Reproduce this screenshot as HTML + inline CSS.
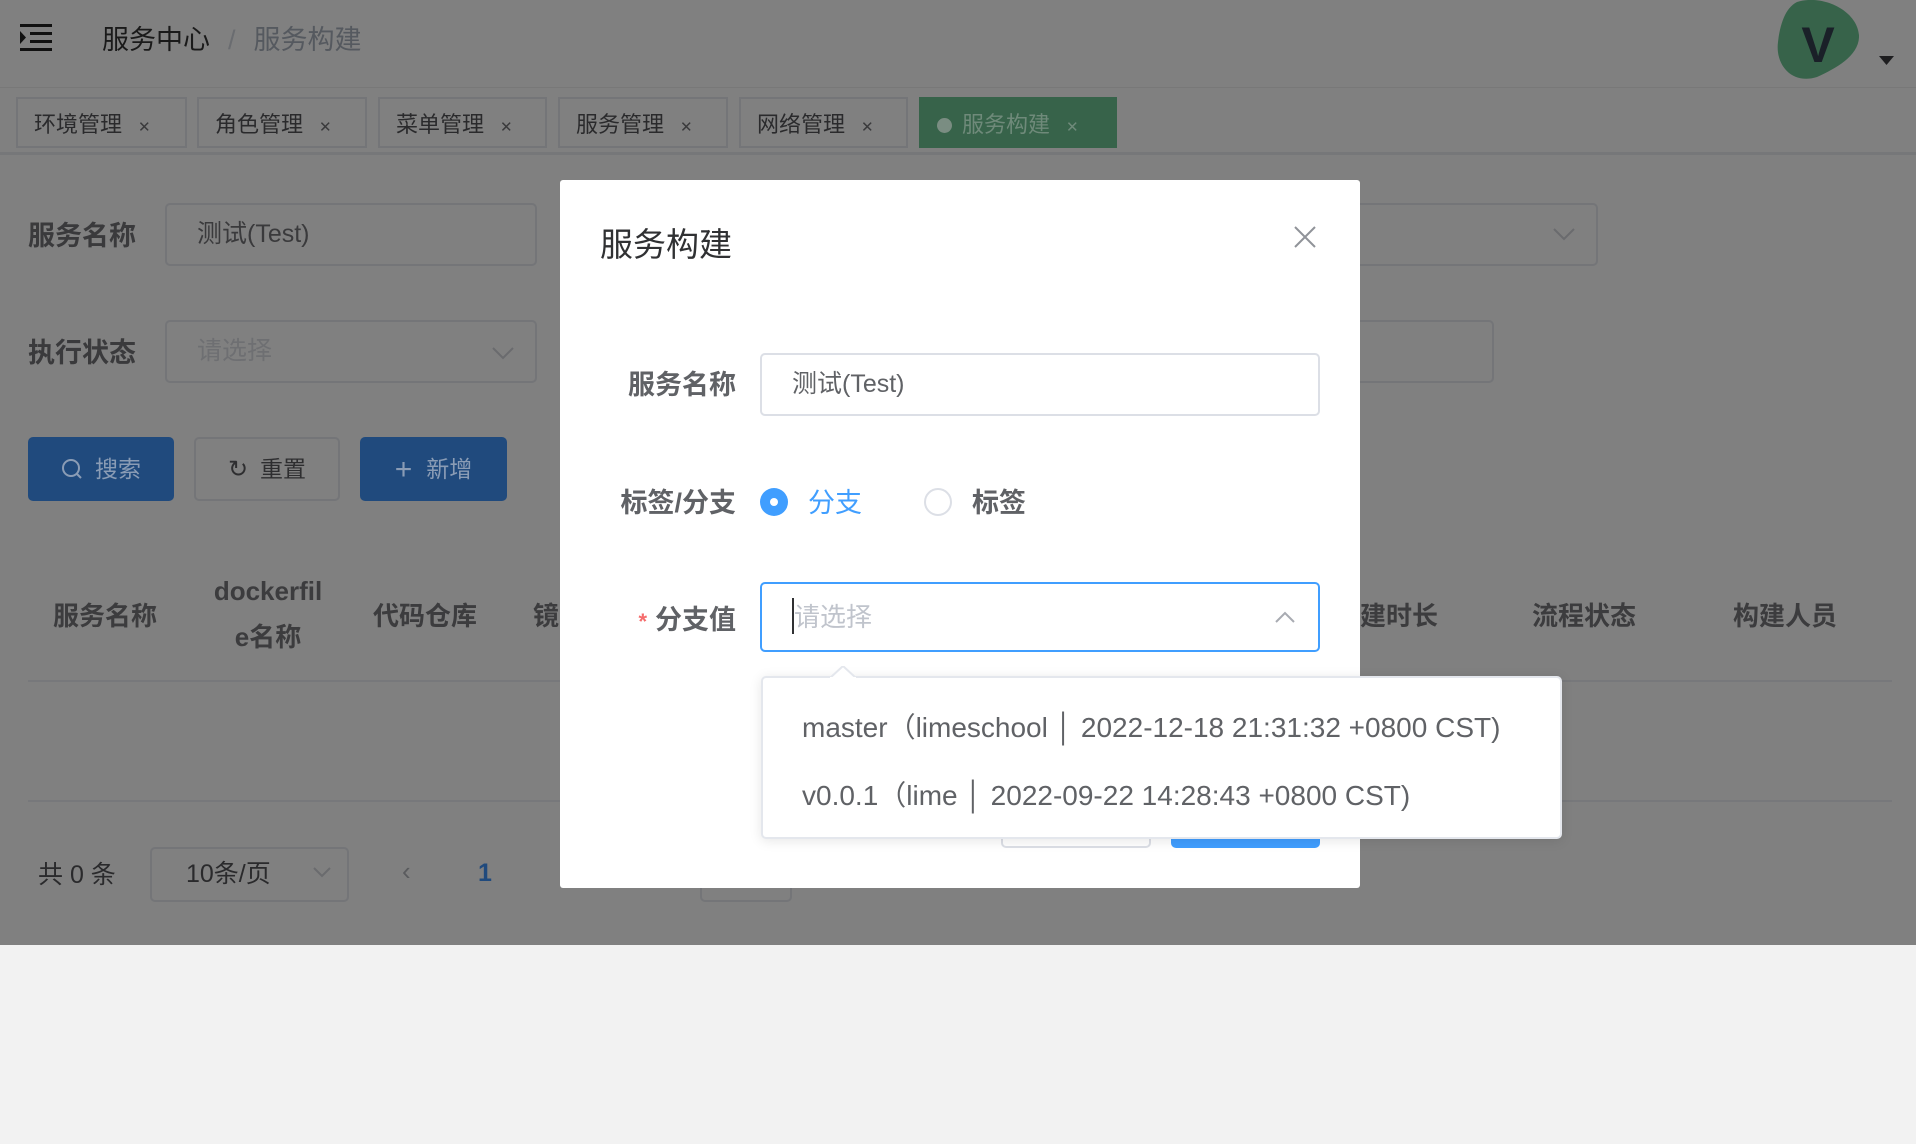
<!DOCTYPE html>
<html><head><meta charset="utf-8"><style>
*{box-sizing:border-box;margin:0;padding:0}
body{width:1916px;height:1144px;overflow:hidden;background:#f2f2f2;font-family:"Liberation Sans","Noto Sans CJK SC",sans-serif;position:relative}
.app{position:absolute;left:0;top:0;width:1916px;height:945px;background:#808080}
.a{position:absolute}
.hdr{left:0;top:0;width:1916px;height:88px;background:#808080;border-bottom:1px solid #787878}
.tabs{left:0;top:88px;width:1916px;height:67px;border-bottom:3px solid #767779}
.tab{position:absolute;top:97px;height:51px;border:2px solid #747578;font-size:22px;color:#2a2a2c;line-height:51px;padding-left:16px}
.tab i{font-style:normal;font-size:15px;margin-left:16px;color:#3a3a3c}
.lbl{font-size:27px;font-weight:bold;color:#3a3a3c}
.box{border:2px solid #747578;border-radius:5px}
.th{font-size:26px;font-weight:bold;color:#3c3c3e;text-align:center}
.btn{border-radius:5px;font-size:23px;color:#8a9cb5;text-align:center;line-height:64px}
.ml{font-size:27px;font-weight:bold;color:#606266;text-align:right;width:200px}
</style></head><body>
<div class="app">
<div class="a hdr"></div>
<svg class="a" style="left:20px;top:24px" width="32" height="28" viewBox="0 0 32 28"><rect x="0" y="0" width="32" height="3" fill="#111"/><rect x="10" y="8" width="22" height="3" fill="#111"/><rect x="10" y="16" width="22" height="3" fill="#111"/><rect x="0" y="24" width="32" height="3" fill="#111"/><path d="M0 7 L6 13.5 L0 20Z" fill="#111"/></svg>
<div class="a" style="left:102px;top:18px;font-size:27px;color:#1a1a1a">服务中心<span style="color:#6a6c70;margin:0 18px">/</span><span style="color:#55595f">服务构建</span></div>
<svg class="a" style="left:1777px;top:0" width="82" height="80" viewBox="0 0 82 80"><path d="M20 2 C45 -6 80 10 82 35 C83 55 60 68 40 77 C15 85 -2 65 1 42 C3 25 8 8 20 2Z" fill="#37634a"/><text x="41" y="62" text-anchor="middle" font-size="50" font-weight="bold" fill="#1a2028" font-family="Liberation Sans">V</text></svg>
<svg class="a" style="left:1879px;top:56px" width="15" height="10"><path d="M0 0H15L7.5 9Z" fill="#1e1e20"/></svg>
<div class="a tabs"></div>
<div class="tab" style="left:16px;width:171px">环境管理<i>✕</i></div>
<div class="tab" style="left:197px;width:170px">角色管理<i>✕</i></div>
<div class="tab" style="left:378px;width:169px">菜单管理<i>✕</i></div>
<div class="tab" style="left:558px;width:170px">服务管理<i>✕</i></div>
<div class="tab" style="left:739px;width:169px">网络管理<i>✕</i></div>
<div class="tab" style="left:919px;width:198px;background:#37634a;border-color:#37634a;color:#6f8a7a"><span style="display:inline-block;width:15px;height:15px;border-radius:50%;background:#7a8d82;margin-right:10px;vertical-align:-1px"></span>服务构建<i style="color:#6f8a7a">✕</i></div>

<div class="a lbl" style="left:28px;top:214px">服务名称</div>
<div class="a box" style="left:165px;top:203px;width:372px;height:63px;font-size:25px;color:#3a3a3c;line-height:59px;padding-left:30px">测试(Test)</div>
<div class="a box" style="left:1340px;top:203px;width:258px;height:63px"></div>
<svg class="a" style="left:1553px;top:228px" width="22" height="14"><path d="M1 1L11 11L21 1" stroke="#6a6b6e" stroke-width="2" fill="none"/></svg>
<div class="a lbl" style="left:28px;top:331px">执行状态</div>
<div class="a box" style="left:165px;top:320px;width:372px;height:63px;font-size:25px;color:#6e6f72;line-height:59px;padding-left:30px">请选择</div>
<svg class="a" style="left:492px;top:347px" width="22" height="14"><path d="M1 1L11 11L21 1" stroke="#6a6b6e" stroke-width="2" fill="none"/></svg>
<div class="a box" style="left:1340px;top:320px;width:154px;height:63px"></div>

<div class="a btn" style="left:28px;top:437px;width:146px;height:64px;background:#204a7d"><svg width="22" height="22" viewBox="0 0 22 22" style="vertical-align:-3px;margin-right:12px"><circle cx="10" cy="10" r="8" stroke="#8a9cb5" stroke-width="2" fill="none"/><path d="M16 16L20 20" stroke="#8a9cb5" stroke-width="2"/></svg>搜索</div>
<div class="a btn box" style="left:194px;top:437px;width:146px;height:64px;color:#2e2e30;line-height:60px"><span style="font-size:24px;margin-right:12px">↻</span>重置</div>
<div class="a btn" style="left:360px;top:437px;width:147px;height:64px;background:#204a7d"><span style="font-size:30px;margin-right:14px;vertical-align:-2px">+</span>新增</div>

<div class="a th" style="left:53px;top:596px">服务名称</div>
<div class="a th" style="left:198px;top:568px;width:140px;line-height:46px">dockerfil<br>e名称</div>
<div class="a th" style="left:373px;top:596px">代码仓库</div>
<div class="a th" style="left:533px;top:596px">镜</div>
<div class="a th" style="left:1360px;top:596px">建时长</div>
<div class="a th" style="left:1532px;top:596px">流程状态</div>
<div class="a th" style="left:1733px;top:596px">构建人员</div>
<div class="a" style="left:28px;top:680px;width:1864px;height:2px;background:#77787b"></div>
<div class="a" style="left:28px;top:800px;width:1864px;height:2px;background:#77787b"></div>
<div class="a" style="left:38px;top:855px;font-size:25px;color:#2a2a2c">共 0 条</div>
<div class="a box" style="left:150px;top:847px;width:199px;height:55px;font-size:25px;color:#2a2a2c;line-height:51px;padding-left:34px">10条/页</div>
<svg class="a" style="left:313px;top:867px" width="18" height="12"><path d="M1 1L9 9L17 1" stroke="#6a6b6e" stroke-width="2" fill="none"/></svg>
<div class="a" style="left:402px;top:856px;font-size:26px;color:#5a5b5e">‹</div>
<div class="a" style="left:478px;top:859px;font-size:25px;font-weight:bold;color:#204a7d">1</div>
<div class="a box" style="left:700px;top:860px;width:92px;height:42px"></div>
</div>

<!-- modal -->
<div class="a" style="left:560px;top:180px;width:800px;height:708px;background:#fff;border-radius:3px"></div>
<div class="a" style="left:600px;top:218px;font-size:33px;color:#303133">服务构建</div>
<svg class="a" style="left:1294px;top:226px" width="22" height="22"><path d="M1 1L21 21M21 1L1 21" stroke="#909399" stroke-width="2"/></svg>
<div class="a ml" style="left:536px;top:363px">服务名称</div>
<div class="a" style="left:760px;top:353px;width:560px;height:63px;border:2px solid #dcdfe6;border-radius:5px;font-size:25px;color:#606266;line-height:59px;padding-left:30px">测试(Test)</div>
<div class="a ml" style="left:536px;top:481px">标签/分支</div>
<div class="a" style="left:760px;top:488px;width:28px;height:28px;border-radius:50%;background:#409eff"><div style="width:8px;height:8px;border-radius:50%;background:#fff;margin:10px"></div></div>
<div class="a" style="left:808px;top:481px;font-size:27px;color:#409eff">分支</div>
<div class="a" style="left:924px;top:488px;width:28px;height:28px;border-radius:50%;border:2px solid #dcdfe6"></div>
<div class="a" style="left:972px;top:481px;font-size:27px;color:#606266;font-weight:bold">标签</div>
<div class="a ml" style="left:536px;top:598px"><span style="color:#f56c6c;font-size:22px;margin-right:8px">*</span>分支值</div>
<div class="a" style="left:760px;top:582px;width:560px;height:70px;border:2px solid #409eff;border-radius:5px;font-size:26px;color:#c0c4cc;line-height:66px;padding-left:30px"><span style="display:inline-block;width:2px;height:36px;background:#303133;vertical-align:-8px"></span>请选择</div>
<svg class="a" style="left:1275px;top:611px" width="20" height="12"><path d="M1 11L10 2L19 11" stroke="#a8abb2" stroke-width="2" fill="none"/></svg>
<div class="a" style="left:1001px;top:800px;width:150px;height:48px;border:2px solid #dcdfe6;border-radius:5px"></div>
<div class="a" style="left:1171px;top:800px;width:149px;height:48px;background:#409eff;border-radius:5px"></div>
<div class="a" style="left:761px;top:676px;width:801px;height:163px;background:#fff;border:2px solid #e4e7ed;border-radius:5px;box-shadow:0 2px 12px rgba(0,0,0,.1)"></div>
<svg class="a" style="left:830px;top:666px" width="26" height="13"><path d="M0 12L13 0L26 12" fill="#fff" stroke="#e4e7ed" stroke-width="2"/><rect x="0" y="11" width="26" height="3" fill="#fff"/></svg>
<div class="a" style="left:802px;top:706px;font-size:28px;color:#606266;white-space:nowrap">master（limeschool │ 2022-12-18 21:31:32 +0800 CST)</div>
<div class="a" style="left:802px;top:774px;font-size:28px;color:#606266;white-space:nowrap">v0.0.1（lime │ 2022-09-22 14:28:43 +0800 CST)</div>
</body></html>
